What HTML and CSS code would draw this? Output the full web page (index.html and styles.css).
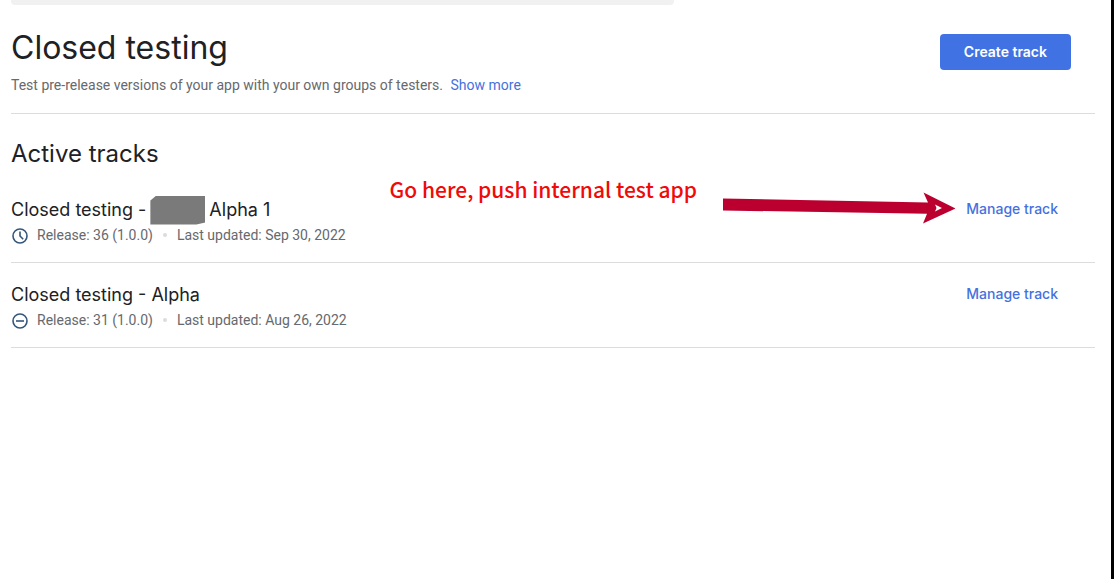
FILE: index.html
```
<!DOCTYPE html>
<html lang="en">
    <head>
        <meta charset="UTF-8">
        <meta name="viewport" content="width=device-width, initial-scale=1">
        <title>Closed testing</title>
        <link rel="stylesheet" href="styles.css">
    </head>

    <body>
        <div class="top-card"></div>

        <main class="page">
            <header class="page-header">
                <div>
                    <h1>Closed testing</h1>
                    <p class="intro">Test pre-release versions of your app with your own groups of testers. <a href="#" class="show-more">Show more</a></p>
                </div>
                <button type="button" class="create">Create track</button>
            </header>

            <section>
                <h2>Active tracks</h2>

                <div class="track">
                    <div>
                        <h3>Closed testing - <span class="redacted"></span> Alpha 1</h3>
                        <p class="meta">
                            <svg class="icon" viewBox="0 0 16 16" aria-hidden="true">
                                <circle cx="8" cy="8" r="7"/>
                                <path d="M8 3.5V8l3.2 3.2"/>
                            </svg>
                            <span>Release: 36 (1.0.0)</span>
                            <span class="dot"></span>
                            <span>Last updated: Sep 30, 2022</span>
                        </p>
                    </div>
                    <a href="#" class="manage">Manage track</a>

                    <!-- note drawn over the row -->
                    <div class="note">
                        <span class="note-text">Go here, push internal test app</span>
                        <svg class="arrow" viewBox="0 0 232 32" aria-hidden="true">
                            <path fill="#bb0030" d="M0 6.5L205 10.500L200.500 0.500L232.500 16.500L200 31.500L204 21.700L0 18.500Z"/>
                            <path fill="#fff" d="M212 12.500L219 16L212 19.500L213.500 16Z"/>
                        </svg>
                    </div>
                </div>

                <div class="track">
                    <div>
                        <h3>Closed testing - Alpha</h3>
                        <p class="meta">
                            <svg class="icon" viewBox="0 0 16 16" aria-hidden="true">
                                <circle cx="8" cy="8" r="7"/>
                                <path d="M4 8h8"/>
                            </svg>
                            <span>Release: 31 (1.0.0)</span>
                            <span class="dot"></span>
                            <span>Last updated: Aug 26, 2022</span>
                        </p>
                    </div>
                    <a href="#" class="manage">Manage track</a>
                </div>
            </section>
        </main>

        <span class="edge-mark"></span>
    </body>
</html>
```

FILE: styles.css
```
* {
	margin: 0;
	padding: 0;
	box-sizing: border-box;
}

body {
	position: relative;
	min-height: 100vh;
	background: #fff;
	border-right: 3px solid #000;
	color: #202124;
	font-family: Roboto, sans-serif;
	font-size: 14px;
	line-height: 20px;
}

a {
	color: #4571de;
	text-decoration: none;
}

h1, h2, h3, .create, .manage {
	font-family: Inter, sans-serif;
	font-weight: 400;
}

.top-card {
	max-width: 663px;
	height: 5px;
	margin-left: 11px;
	background: #f1f1f1;
	border-radius: 0 0 4px 4px;
}

.page {
	padding: 0 16px 0 11px;
}

.page-header {
	display: flex;
	justify-content: space-between;
	align-items: flex-start;
	padding: 21px 24px 18px 0;
	border-bottom: 1px solid #dcdcdc;
}

h1 {
	font-size: 32px;
	line-height: 44px;
}

.intro {
	margin-top: 5px;
	color: #66696d;
}

.show-more {
	margin-left: 4px;
}

.create {
	height: 36px;
	margin-top: 8px;
	padding: 0 24px 2px;
	border: none;
	border-radius: 4px;
	background: #4172e3;
	color: #fff;
	font-size: 14px;
	font-weight: 600;
	cursor: pointer;
}

h2 {
	padding: 24px 0 16px;
	font-size: 24px;
	line-height: 32px;
}

.track {
	position: relative;
	display: flex;
	justify-content: space-between;
	align-items: flex-start;
	padding: 10px 37px 17px 0;
	border-bottom: 1px solid #dcdcdc;
}

.track + .track {
	padding-top: 18px;
}

h3 {
	display: flex;
	align-items: center;
	gap: 4px;
	height: 28px;
	font-size: 18px;
}

.redacted {
	width: 55px;
	height: 29px;
	background: #7a7a7a;
	clip-path: polygon(6px 0, 100% 0, 100% 27px, 46px 100%, 0 100%, 0 5px);
}

.meta {
	display: flex;
	align-items: center;
	margin-top: 1px;
	color: #66696d;
}

.icon {
	width: 16px;
	height: 16px;
	margin: 1px 9px 0 1px;
	fill: none;
	stroke: #34567c;
	stroke-width: 1.6;
}

.dot {
	width: 4px;
	height: 4px;
	margin: 0 10px;
	border-radius: 50%;
	background: #dadce0;
}

.manage {
	margin-top: 3px;
	font-size: 14px;
	font-weight: 500;
}

.note {
	position: absolute;
	top: 6px;
	right: 140px;
	display: flex;
	gap: 26px;
}

.note-text {
	margin-top: -17px;
	color: #f00a0a;
	font-family: "Noto Sans CJK SC", sans-serif;
	font-size: 21px;
	font-weight: 500;
	line-height: 28px;
}

.arrow {
	width: 232px;
	height: 32px;
}

.edge-mark {
	position: absolute;
	top: 16px;
	right: -3px;
	width: 1px;
	height: 9px;
	background: #8ab4f8;
}
```
